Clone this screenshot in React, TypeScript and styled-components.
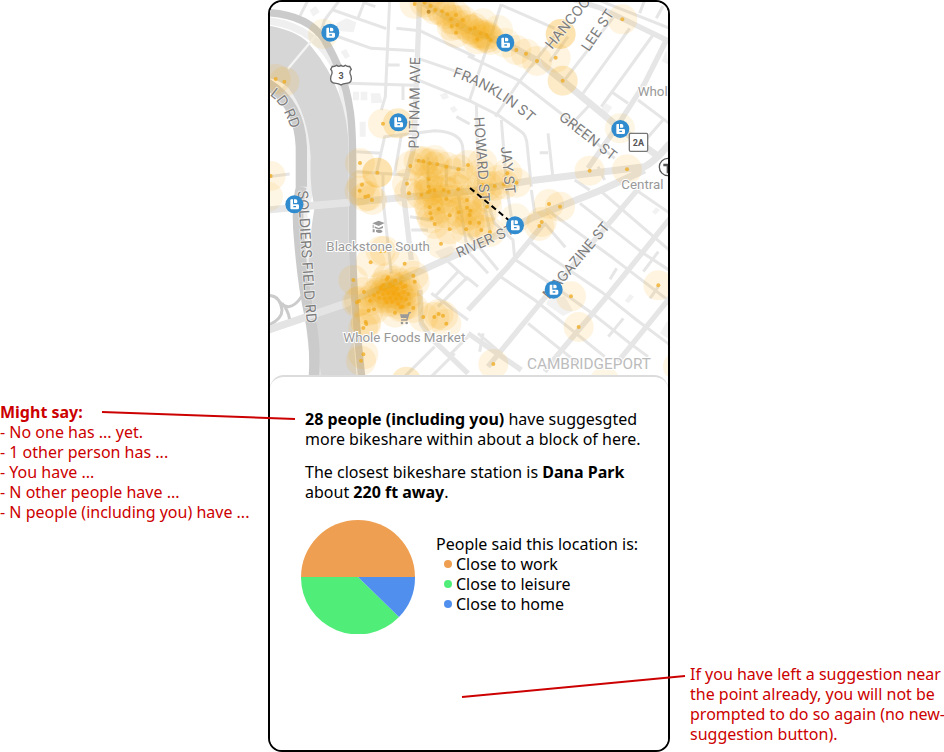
import React from "react";
import styled, { createGlobalStyle } from "styled-components";

const GlobalStyle = createGlobalStyle`
  * { box-sizing: border-box; }
  body {
    margin: 0;
    background: #fff;
    color: #000;
    font: 16px/20px "Noto Sans", sans-serif;
  }
`;

const Page = styled.main`
  display: grid;
  grid-template-columns: minmax(0, 268fr) minmax(0, 402fr) minmax(0, 274fr);
  min-height: 100vh;
  overflow: hidden;
`;

const Note = styled.aside<{ $side: "left" | "right" }>`
  position: relative;
  z-index: 1;
  color: #cc0000;
  align-self: ${(p) => (p.$side === "left" ? "start" : "end")};
  margin: ${(p) => (p.$side === "left" ? "402px 0 0" : "0 -4px 8px 20px")};
`;

const NoteTitle = styled.h2`
  margin: 0;
  font-size: 16px;
  line-height: 20px;
  font-weight: 700;
`;

const NoteText = styled.p`
  margin: 0;
`;

const PlainList = styled.ul`
  list-style: none;
  margin: 0;
  padding: 0;
`;

const Connector = styled.svg<{ $side: "left" | "right" }>`
  position: absolute;
  top: ${(p) => (p.$side === "left" ? "8px" : "10px")};
  left: ${(p) => (p.$side === "left" ? "102px" : "-228px")};
  overflow: visible;
  pointer-events: none;
  stroke: #cc0000;
  stroke-width: 2;
`;

const Phone = styled.section`
  display: flex;
  flex-direction: column;
  border: 2px solid #000;
  border-radius: 14px;
  overflow: hidden;
  background: #fff;
`;

const MapView = styled.svg`
  display: block;
  width: 100%;
  height: auto;
  background: #fff;
`;

const Sheet = styled.div`
  flex: 1;
  display: flex;
  flex-direction: column;
  gap: 13px;
  margin-top: -1px;
  padding: 32px 20px 32px 31px;
  border-top: 2px solid #dcdcdc;
  border-radius: 14px 14px 0 0;
  background: #fff;
`;

const Paragraph = styled.p`
  margin: 0;
  padding: 0 4px;
`;

const Summary = styled.div`
  display: flex;
  align-items: center;
  gap: 21px;
  padding-top: 5px;
`;

const Pie = styled.svg`
  flex: none;
  width: 114px;
  height: 114px;
`;

const Legend = styled.div`
  padding-bottom: 6px;
`;

const LegendTitle = styled.h3`
  margin: 0;
  font-size: 16px;
  line-height: 20px;
  font-weight: 400;
`;

const LegendItem = styled.li<{ $color: string }>`
  display: flex;
  align-items: center;
  gap: 4px;
  padding-left: 8px;

  &::before {
    content: "";
    width: 8px;
    height: 8px;
    border-radius: 50%;
    background: ${(p) => p.$color};
  }
`;

const StreetLabel = styled.text`
  font-family: Inter, sans-serif;
  font-size: 42px;
  fill: #7c7c7c;
  stroke: #fff;
  stroke-width: 5;
  stroke-opacity: 0.6;
  paint-order: stroke;
`;

const PlaceLabel = styled.text<{ $area?: boolean }>`
  font-family: Roboto, sans-serif;
  font-size: ${(p) => (p.$area ? 46 : 40)}px;
  fill: ${(p) => (p.$area ? "#bcbcbc" : "#999")};
  stroke: #fff;
  stroke-width: 6;
  paint-order: stroke;
`;

const ShieldLabel = styled.text`
  font-family: Roboto, sans-serif;
  font-size: 27px;
  font-weight: 700;
  fill: #555;
  text-anchor: middle;
`;

/* Map geometry, three units to a pixel */
const minorRoads = [
  "M120 0L95 50", "M215 0L170 60L160 90", "M195 30L355 86", "M322 20L288 8L270 55",
  "M365 0L352 290L340 330", "M205 108L310 145L440 152", "M385 85L455 92L620 170",
  "M355 195L395 195", "M240 250L440 256", "M405 255L405 300", "M450 175L610 230",
  "M440 236L610 305L690 345L760 395Q776 405 778 440L790 560",
  "M265 455L340 460", "M265 515L415 525", "M325 520L350 410L395 405L500 392Q585 395 585 450L588 500",
  "M400 405L380 520", "M565 350L605 372", "M480 470L480 560", "M440 480L590 510", "M535 500L535 560",
  "M345 520L345 600L370 820", "M0 530L65 522", "M700 12L605 300",
  "M700 15L860 85", "M600 168L750 240L885 345L1040 475", "M885 75L750 250L682 350",
  "M625 310L632 560", "M700 360L716 560L730 650", "M840 400L855 535", "M815 458L840 458",
  "M1045 40L890 240", "M1085 85L945 280", "M1155 105L1000 320", "M965 315L925 358",
  "M845 185L900 110", "M1030 275L1080 310", "M1206 372L1110 300", "M1185 360L1115 440",
  "M965 -10L1206 85", "M1130 0L1115 40", "M1185 18L1165 55", "M920 540L965 570",
  "M990 500L1010 540", "M790 570L800 640", "M640 570L665 690",
  "M660 610L680 670L735 720L740 775", "M735 775L820 832L966 935L1086 1030L1140 1070",
  "M690 825L800 900L1010 1070", "M780 720L816 750L1006 880L1106 960L1206 1035",
  "M830 670L892 742", "M851 640L1036 775L1206 905", "M936 610L1126 760L1206 812", "M1000 575L1206 752",
  "M1090 560L1206 640", "M1171 755L1126 815", "M1171 860L1146 895",
  "M600 755L660 820", "M600 835L630 860", "M630 1000L700 1060",
  "M635 1055L645 1000", "M1066 955L1021 1010", "M1046 805L1026 838", "M780 970L930 1090",
  "M540 785L600 840", "M570 815L500 890",
  "M600 830L510 920", "M500 1040L410 1130",
  "M560 1060L490 1130", "M600 1010L540 1070", "M430 690L480 690", "M426 650L490 660",
  "M600 700L690 810", "M490 880L600 960", "M570 580L600 760",
];

const majorRoads = [
  "M455 0L445 250L438 440L405 570L430 780", "M890 -10L1000 25L1206 125",
  "M1195 120L1130 250L1040 390L960 505", "M600 930L720 800L830 668",
  "M660 1100L816 910L1036 655L1116 560", "M830 1115L856 1080L1016 890L1206 655",
  "M1050 1085L1206 893", "M600 1000L760 1110", "M455 870L460 970L490 1015L600 1120",
];

const arterials = [
  "M420 -20L600 90L712 130L810 183L884 242L1056 385L1165 465",
  "M0 630L240 608L600 574L780 543L1130 500Q1160 485 1206 430",
  "M0 990L240 908L460 812L600 748L800 650L1000 570L1130 510",
];

const buildings = [
  "M205 70l30 -15l30 12l-8 30l-45 -4z", "M218 155l16 -8l12 22l-14 8z", "M255 275l18 0l0 26l-18 0z",
  "M278 275l20 0l0 26l-20 0z", "M308 280l28 0l8 28l-34 2z", "M275 365l18 0l0 45l-18 0z",
  "M125 30l18 -12l12 18l-20 14z", "M515 285l20 -8l8 16l-18 6z", "M545 325l14 -8l10 14l-14 8z",
  "M1015 310l18 12l-14 20l-20 -14z", "M1195 150l-14 34l20 10z", "M1196 965l10 0l0 55l-30 -20z",
  "M840 900l50 -12l25 45l-30 15l-50 -35z", "M500 755l50 -18l20 20l-50 20z",
  "M1086 882l12 8l-16 20l-12 -8z", "M1164 622l12 8l-14 14l-10 -8z",
];

/* x, y, number of suggestions stacked there */
const suggestions: [number, number, number][] = [
  [23, 237, 1], [49, 245, 1], [345, 371, 1], [276, 489, 1], [328, 518, 3], [282, 554, 1], [8, 528, 1],
  [440, 12, 1], [470, 8, 1], [488, 18, 1], [502, 30, 1], [522, 34, 1], [538, 43, 1], [549, 58, 1],
  [564, 45, 1], [584, 60, 1], [551, 78, 1], [568, 75, 1], [564, 98, 1], [607, 88, 1], [620, 84, 1],
  [628, 118, 1], [638, 100, 1], [655, 105, 1], [660, 112, 1], [668, 120, 1],
  [745, 150, 1], [774, 161, 1], [807, 183, 1], [878, 102, 3], [863, 173, 1], [884, 242, 2],
  [1063, 58, 1], [965, 512, 1], [1077, 508, 1],
  [427, 498, 1], [452, 482, 1], [466, 484, 1], [485, 490, 1], [508, 493, 1],
  [535, 500, 1], [571, 508, 1], [417, 551, 1], [482, 538, 1], [482, 560, 1], [600, 495, 1],
  [643, 490, 1], [642, 555, 1], [660, 558, 1], [680, 558, 1], [708, 553, 1], [718, 520, 1], [745, 548, 1],
  [486, 572, 1], [499, 570, 1], [527, 570, 1], [542, 576, 1], [571, 568, 1],
  [275, 572, 1], [292, 590, 1], [301, 588, 1], [312, 600, 1], [423, 580, 1], [460, 584, 1], [480, 577, 1],
  [535, 597, 1], [485, 622, 1], [487, 640, 1], [491, 655, 1], [500, 672, 1],
  [512, 627, 1], [545, 646, 1], [572, 637, 1], [545, 688, 1], [594, 688, 1], [519, 731, 1],
  [607, 632, 1], [605, 645, 1], [606, 668, 1], [633, 668, 1], [640, 690, 1], [666, 696, 1],
  [657, 620, 1], [657, 592, 1], [597, 600, 1], [597, 623, 1],
  [308, 787, 1], [338, 753, 1], [350, 752, 1], [410, 791, 1], [256, 840, 1], [288, 876, 1], [267, 907, 1],
  [273, 903, 1], [436, 827, 1], [440, 845, 1], [421, 882, 1], [302, 932, 1], [318, 928, 1], [381, 938, 1],
  [436, 924, 1], [423, 912, 1], [466, 951, 1], [499, 951, 1], [512, 942, 1], [525, 947, 1], [535, 971, 1],
  [293, 966, 1], [295, 972, 1], [286, 984, 1], [286, 1063, 1], [279, 1082, 1],
  [843, 612, 1], [876, 620, 1], [821, 666, 1], [814, 678, 1], [909, 889, 1], [932, 981, 1],
  [1171, 856, 1], [676, 1092, 1],
];

const denseDots: [number, number][] = [
  [360, 832], [356, 838], [382, 842], [398, 850], [346, 855], [366, 852], [375, 860], [388, 866],
  [404, 862], [340, 868], [352, 870], [330, 878], [318, 886], [345, 882], [360, 880], [378, 880],
  [392, 884], [408, 876], [334, 894], [350, 896], [366, 894], [384, 896], [400, 894], [414, 898],
  [306, 902], [372, 906], [390, 912], [404, 920], [356, 906], [412, 858], [398, 922], [338, 862],
];

const halos: [number, number, number][] = [
  [165, 102, 1], [390, 370, 2], [0, 590, 1], [1056, 385, 1], [743, 655, 1], [712, 128, 1],
  [1230, 1100, 1], [1010, 1145, 1], [415, 1145, 2], [690, 90, 1], [645, 70, 1],
  [465, 490, 1], [500, 500, 1], [560, 520, 1], [520, 535, 1], [470, 530, 1], [600, 540, 1],
  [620, 580, 1], [560, 600, 1], [510, 600, 1], [530, 640, 1], [580, 660, 1], [480, 610, 1],
  [640, 640, 1], [690, 540, 1], [500, 480, 1], [640, 520, 1], [560, 560, 1],
  [590, 75, 1], [635, 105, 1], [655, 115, 1], [560, 60, 1], [610, 90, 1], [520, 30, 1],
  [625, 100, 1], [480, 0, 1], [645, 108, 1],
];

const stations: [number, number][] = [
  [187, 98], [391, 367], [712, 128], [1057, 387], [79, 613], [741, 676], [857, 869],
];

function Station({ x, y }: { x: number; y: number }) {
  return (
    <g transform={`translate(${x} ${y})`}>
      <circle r="27" fill="#308ccf" />
      <path
        fill="#fff"
        fillRule="evenodd"
        d="M-9 -15h5v15h14q4 0 4 4v7q0 4 -4 4h-19q-3 0 -3 -3v-24q0 -3 3 -3zM-1 -15h5q5 0 5 5v3q0 3 -3 3h-7zM-3 5h8v4h-8z"
      />
    </g>
  );
}

function NeighborhoodMap() {
  return (
    <MapView viewBox="6 6 1194 1122" role="img" aria-label="Map of suggested bikeshare locations in Cambridgeport">
      <defs>
        <path id="franklin" d="M553 230Q690 274 810 390" />
        <path id="soldiers" d="M89 572L101 760Q108 900 128 1070" />
        <path id="field" d="M4 286Q52 312 82 430" />
      </defs>
      <g fill="none" stroke="#efefef">
        <path d="M0 62Q150 80 210 220Q236 300 238 420V800L268 1130" strokeWidth="22" />
        <path d="M45 260Q120 320 122 450V560L100 640L105 760L150 1130" strokeWidth="36" />
      </g>
      <path d="M0 76Q100 95 130 140Q240 270 242 450V740Q246 920 266 1130H158Q152 1000 124 850Q116 760 140 620Q125 570 128 470Q120 340 60 262Q30 238 0 235Z" fill="#d6d6d6" />
      <path d="M60 206L145 105" stroke="#f4f4f4" strokeWidth="7" />
      <g fill="#f2f2f2">{buildings.map((d) => <path key={d} d={d} />)}</g>
      <g fill="none" stroke="#e6e6e6" strokeLinejoin="round">
        <g strokeWidth="9">{minorRoads.map((d) => <path key={d} d={d} />)}</g>
        <g strokeWidth="16">{majorRoads.map((d) => <path key={d} d={d} />)}</g>
        <g strokeWidth="21">{arterials.map((d) => <path key={d} d={d} />)}</g>
      </g>
      <g fill="none" stroke="#cbcbcb">
        <path d="M0 38Q120 45 170 120Q230 220 245 325Q256 380 254 570V740Q255 890 281 1130" strokeWidth="22" />
        <path d="M-5 250Q95 310 100 440V560" strokeWidth="34" />
        <path d="M100 560Q84 620 94 720Q105 860 126 950Q144 1040 138 1130" strokeWidth="32" />
        <path d="M0 886Q36 885 42 930Q42 958 0 976M25 892Q60 950 102 888M65 958Q60 930 42 910" strokeWidth="9" />
      </g>
      <g fill="none" stroke="#e4e4e4" strokeWidth="22">
        <path d="M0 990L240 908" />
        <path d="M125 617L245 607" />
      </g>
      <g fill="#f7a90e">
        {suggestions.map(([x, y, n]) => (
          <circle key={`${x}-${y}`} cx={x} cy={y} r="45" fillOpacity={0.03 + n * 0.1} />
        ))}
        {halos.map(([x, y, n]) => (
          <circle key={`${x}-${y}`} cx={x} cy={y} r="45" fillOpacity={n * 0.11} />
        ))}
        {denseDots.map(([x, y]) => (
          <circle key={`${x}-${y}`} cx={x} cy={y} r="45" fillOpacity="0.09" />
        ))}
      </g>
      <g fill="#efa91c">
        {suggestions.map(([x, y]) => (
          <circle key={`${x}-${y}`} cx={x} cy={y} r="6" fillOpacity="0.75" />
        ))}
        {denseDots.map(([x, y]) => (
          <circle key={`${x}-${y}`} cx={x} cy={y} r="6" fillOpacity="0.6" fill="#f5a50a" />
        ))}
        <circle cx="482" cy="35" r="6" fill="#c78f2e" />
      </g>

      <StreetLabel transform="translate(452 446) rotate(-89)">PUTNAM AVE</StreetLabel>
      <StreetLabel><textPath href="#franklin">FRANKLIN ST</textPath></StreetLabel>
      <StreetLabel transform="translate(870 356) rotate(38)">GREEN ST</StreetLabel>
      <StreetLabel transform="translate(852 150) rotate(-51)">HANCOCK</StreetLabel>
      <StreetLabel transform="translate(962 157) rotate(-56)">LEE ST</StreetLabel>
      <StreetLabel transform="translate(618 352) rotate(86)">HOWARD ST</StreetLabel>
      <StreetLabel transform="translate(698 440) rotate(84)">JAY ST</StreetLabel>
      <StreetLabel transform="translate(572 774) rotate(-24)">RIVER ST</StreetLabel>
      <StreetLabel transform="translate(844 900) rotate(-50)">MAGAZINE ST</StreetLabel>
      <StreetLabel><textPath href="#soldiers">SOLDIERS FIELD RD</textPath></StreetLabel>
      <StreetLabel><textPath href="#field">LD RD</textPath></StreetLabel>

      <PlaceLabel x="175" y="752">Blackstone South</PlaceLabel>
      <PlaceLabel x="226" y="1026">Whole Foods Market</PlaceLabel>
      <PlaceLabel x="1109" y="289">Whol</PlaceLabel>
      <PlaceLabel x="1060" y="566">Central</PlaceLabel>
      <PlaceLabel $area x="777" y="1108">CAMBRIDGEPORT</PlaceLabel>

      <g fill="#999">
        <path d="M313 670L332 662L350 669L332 678ZM320 679L332 684L345 678V684Q333 690 320 684ZM314 674h3v11h-3zM314 688h6v9h-6zM324 690Q334 686 343 692V696Q334 702 324 695Z" />
        <path d="M396 943H419L422 936H429V940H425L418 962H399V958H415L416 954H399Z" />
        <circle cx="402" cy="969" r="4" />
        <circle cx="416" cy="969" r="4" />
      </g>

      <path d="M193 199Q200 201 206 196Q213 202 219 196Q225 202 232 196Q238 201 245 199L250 208Q242 216 249 228Q255 250 234 250Q225 250 219 255Q213 250 204 250Q183 250 189 228Q196 216 188 208Z" fill="#fff" stroke="#666" strokeWidth="4" />
      <ShieldLabel x="219" y="236">3</ShieldLabel>
      <rect x="1084" y="400" width="55" height="54" rx="4" fill="#fff" stroke="#777" strokeWidth="4" />
      <ShieldLabel x="1111" y="437">2A</ShieldLabel>
      <circle cx="1200" cy="501" r="26" fill="#fff" stroke="#555" strokeWidth="4" />
      <path d="M1186 491H1214V499H1204V520H1196V499H1186Z" fill="#555" />

      <path d="M606 564L741 676" stroke="#000" strokeWidth="6" strokeDasharray="17 11" />
      {stations.map(([x, y]) => <Station key={`${x}-${y}`} x={x} y={y} />)}
    </MapView>
  );
}

const reasons = [
  { label: "Close to work", color: "#ee9f52" },
  { label: "Close to leisure", color: "#50ee78" },
  { label: "Close to home", color: "#518fef" },
];

const phrasings = [
  "- No one has ... yet.",
  "- 1 other person has ...",
  "- You have ...",
  "- N other people have ...",
  "- N people (including you) have ...",
];

export default function App() {
  return (
    <>
      <GlobalStyle />
      <Page>
        <Note $side="left">
          <NoteTitle>Might say:</NoteTitle>
          <PlainList>
            {phrasings.map((text) => <li key={text}>{text}</li>)}
          </PlainList>
          <Connector $side="left" width="193" height="10" aria-hidden="true">
            <path d="M0 2L193 9" />
          </Connector>
        </Note>

        <Phone>
          <NeighborhoodMap />
          <Sheet>
            <Paragraph>
              <b>28 people (including you)</b> have suggesgted more bikeshare within about a block of here.
            </Paragraph>
            <Paragraph>
              The closest bikeshare station is <b>Dana Park</b> about <b>220 ft away</b>.
            </Paragraph>
            <Summary>
              <Pie viewBox="0 0 114 114" role="img" aria-label="Reasons people gave for this location">
                <path d="M0 57A57 57 0 0 0 98 97L57 57Z" fill="#50ee78" />
                <path d="M0 57A57 57 0 0 1 114 57Z" fill="#ee9f52" />
                <path d="M57 57H114A57 57 0 0 1 98 97Z" fill="#518fef" />
              </Pie>
              <Legend>
                <LegendTitle>People said this location is:</LegendTitle>
                <PlainList>
                  {reasons.map((r) => (
                    <LegendItem key={r.label} $color={r.color}>{r.label}</LegendItem>
                  ))}
                </PlainList>
              </Legend>
            </Summary>
          </Sheet>
        </Phone>

        <Note $side="right">
          <NoteText>
            If you have left a suggestion near the point already, you will not be prompted to do so
            again (no new-suggestion button).
          </NoteText>
          <Connector $side="right" width="223" height="24" aria-hidden="true">
            <path d="M0 23L223 2" />
          </Connector>
        </Note>
      </Page>
    </>
  );
}
